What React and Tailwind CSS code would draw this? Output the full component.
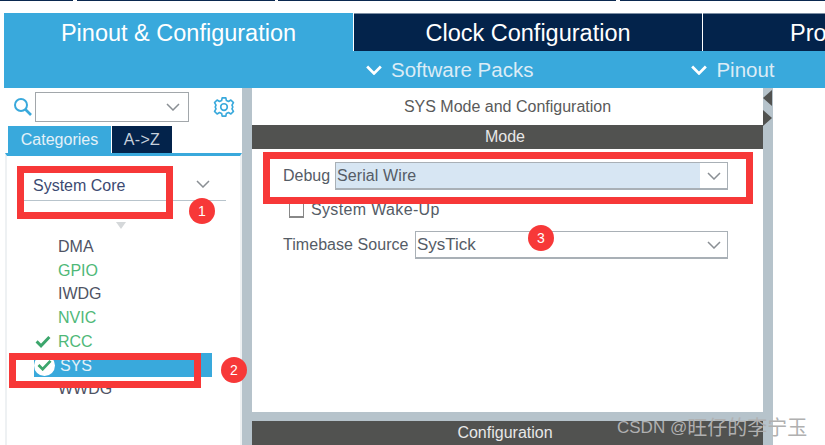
import React from "react";

const font = { fontFamily: '"Liberation Sans", Arial, sans-serif' };

function Chevron({ className = "", color = "#8a8f94", w = 14, h = 8, sw = 1.5 }) {
  return (
    <svg width={w} height={h} viewBox="0 0 14 8" className={className} fill="none">
      <path d="M1 1 L7 7 L13 1" stroke={color} strokeWidth={sw} />
    </svg>
  );
}

function Check({ color = "#3ca66c", size = 16 }) {
  return (
    <svg width={size} height={size * 0.8} viewBox="0 0 16 13" fill="none">
      <path d="M1.5 6.5 L6 11 L14.5 2" stroke={color} strokeWidth="3" />
    </svg>
  );
}

function Gear() {
  return (
    <svg width="22" height="22" viewBox="0 0 24 24" fill="none" stroke="#39a9dc" strokeWidth="1.8" strokeLinejoin="round">
      <path d="M10 2h4l.6 3 2.3 1 2.6-1.6 2.8 2.9L20.7 10l.9 2-.9 2 1.6 2.7-2.8 2.9-2.6-1.6-2.3 1-.6 3h-4l-.6-3-2.3-1-2.6 1.6-2.8-2.9L3.3 14l-.9-2 .9-2-1.6-2.7 2.8-2.9L7.1 6l2.3-1z" />
      <circle cx="12" cy="12" r="3.6" />
    </svg>
  );
}

function Badge({ n, className }) {
  return (
    <div className={`absolute w-[26px] h-[26px] rounded-full bg-[#f73838] text-white text-[14px] flex items-center justify-center ${className}`}>
      {n}
    </div>
  );
}

function Item({ label, color, check }) {
  return (
    <div className="h-[23.7px] flex items-center">
      <div className="w-[24px] flex justify-start pl-[1px]">{check && <Check />}</div>
      <span className={`text-[16px] ${color}`}>{label}</span>
    </div>
  );
}

export default function App() {
  return (
    <div style={font} className="relative w-[825px] h-[445px] overflow-hidden bg-white flex flex-col">
      <div className="h-[13px] flex shrink-0 items-start">
        <div className="h-px w-[73px] bg-[#0a2850]" />
        <div className="h-px w-[198px] ml-[4px] bg-[#0a2850]" />
        <div className="h-px w-[338px] ml-[3px] bg-[#0a2850]" />
        <div className="h-px flex-1 ml-[4px] bg-[#0a2850]" />
      </div>

      <div className="h-[38px] flex shrink-0 pl-[4px] text-[23.5px] leading-[38px] text-white">
        <div className="w-[349px] bg-[#39a9dc] text-center leading-[40px]">Pinout &amp; Configuration</div>
        <div className="w-[348px] ml-px bg-[#03234b] border-t border-[#7c8ea3] text-center">Clock Configuration</div>
        <div className="flex-1 ml-px bg-[#03234b] border-t border-[#7c8ea3] pl-[87px] whitespace-nowrap overflow-hidden">Pro</div>
      </div>

      <div className="h-[37px] ml-[4px] shrink-0 bg-[#39a9dc] flex items-center text-[#dcecf6] text-[20.5px]">
        <div className="ml-[362px] flex items-center gap-[9px]">
          <Chevron color="#ffffff" w={16} h={10} sw={2.4} />
          <span className="mt-[1px]">Software Packs</span>
        </div>
        <div className="ml-[158px] flex items-center gap-[9px]">
          <Chevron color="#ffffff" w={16} h={10} sw={2.4} />
          <span className="mt-[1px]">Pinout</span>
        </div>
      </div>

      <div className="flex-1 flex min-h-0">
        <div className="w-[242px] pl-[5px] shrink-0 flex flex-col">
          <div className="h-[36px] flex items-center pt-[2px]">
            <svg width="20" height="20" viewBox="0 0 20 20" fill="none" stroke="#39a9dc" strokeWidth="2" className="ml-[8px]">
              <circle cx="8" cy="8" r="6" />
              <path d="M12.5 12.5 L18 18" strokeWidth="2.6" />
            </svg>
            <div className="w-[154px] h-[30px] ml-[2px] border border-[#a2a7ab] bg-white flex items-center justify-end pr-[8px]">
              <Chevron />
            </div>
            <div className="ml-[24px]"><Gear /></div>
          </div>

          <div className="h-[29px] flex items-end pl-[3px]">
            <div className="w-[103px] h-[27px] bg-[#39a9dc] text-[#e4f1f8] text-[16px] text-center leading-[28px]">Categories</div>
            <div className="w-[60px] h-[27px] ml-[1px] bg-[#03234b] text-[#c6d0db] text-[16px] tracking-[0.3px] text-center leading-[27px]">A-&gt;Z</div>
          </div>

          <div className="flex-1 border-t-[3px] border-t-[#39a9dc] border-l-2 border-l-[#eef1f3] border-r-2 border-r-[#eef1f3] flex flex-col">
            <div className="ml-[17px] mr-[14px] mt-[13px] h-[32px] border-b border-[#b8c4cc] flex items-center justify-between text-[16px] text-[#3c4a72]">
              <span className="ml-[9px] mt-[3px]">System Core</span>
              <Chevron className="mr-[16px] -mt-[2px]" />
            </div>
            <div className="ml-[109px] mt-[21px] mb-[6px] w-0 h-0 border-l-[5px] border-r-[5px] border-t-[7px] border-l-transparent border-r-transparent border-t-[#d5d8da]" />
            <div className="pl-[27px] flex flex-col">
              <Item label="DMA" color="text-[#4f5364]" />
              <Item label="GPIO" color="text-[#4fb878]" />
              <Item label="IWDG" color="text-[#4f5364]" />
              <Item label="NVIC" color="text-[#4fb878]" />
              <Item label="RCC" color="text-[#4fb878]" check />
              <div className="h-[24px] mr-[28px] bg-[#39a9dc] flex items-center">
                <div className="w-[26px] h-[24px] flex items-center">
                  <div className="w-[21px] h-[21px] rounded-full bg-white flex items-center justify-center"><Check size={15} /></div>
                </div>
                <span className="text-[16px] text-[#e4f1f8] mt-[1px]">SYS</span>
              </div>
              <Item label="WWDG" color="text-[#4f5364]" />
            </div>
          </div>
        </div>

        <div className="w-[10px] shrink-0 bg-[#b6c3cb]" />

        <div className="w-[511px] shrink-0 flex flex-col text-[16px] text-[#555c66]">
          <div className="h-[37px] flex items-center justify-center text-[16px] text-[#5a5a5a]">SYS Mode and Configuration</div>
          <div className="h-[24px] bg-[#515250] text-[#e8e8e8] flex items-center justify-center pr-[5px]">Mode</div>
          <div className="flex-1 flex flex-col">
            <div className="mt-[13px] ml-[31px] flex items-center h-[28px]">
              <span className="w-[52px]">Debug</span>
              <div className="w-[393px] h-[28px] border border-[#a9b0b6] border-b-2 bg-white flex">
                <div className="flex-1 bg-[#d7e6f3] pl-[1px] leading-[26px] tracking-[0.1px]">Serial Wire</div>
                <div className="w-[27px] flex items-center justify-center"><Chevron /></div>
              </div>
            </div>
            <div className="ml-[37px] mt-[11px] flex items-center h-[18px]">
              <div className="w-[15px] h-[15px] border border-[#888] border-b-2 mr-[7px]" />
              <span className="tracking-[0.35px]">System Wake-Up</span>
            </div>
            <div className="mt-[12px] ml-[31px] flex items-center h-[28px]">
              <span className="w-[132px] whitespace-nowrap tracking-[0.05px]">Timebase Source</span>
              <div className="w-[313px] h-[28px] border border-[#a9b0b6] border-b-2 bg-white flex items-center justify-between pl-[1px] pr-[6px]">
                <span className="text-[17px]">SysTick</span>
                <Chevron />
              </div>
            </div>
          </div>
          <div className="h-[9px] bg-[#b6c3cb] mt-auto" />
          <div className="h-[24px] bg-[#515250] text-[#e8e8e8] flex items-center justify-center pr-[5px]">Configuration</div>
        </div>

        <div className="relative w-[10px] shrink-0 bg-[#b6c3cb]">
          <div className="absolute left-0 top-[2px] w-0 h-0 border-y-[8px] border-y-transparent border-r-[9px] border-r-[#515250]" />
          <div className="absolute left-0 top-[22px] w-0 h-0 border-y-[8px] border-y-transparent border-l-[9px] border-l-[#515250]" />
        </div>
      </div>

      {/* annotations */}
      <div className="absolute left-[17px] top-[166px] w-[156px] h-[53px] border-[7px] border-[#f73838]" />
      <div className="absolute left-[9px] top-[353px] w-[192px] h-[35px] border-[7px] border-[#f73838]" />
      <div className="absolute left-[263px] top-[152px] w-[490px] h-[52px] border-[7px] border-[#f73838]" />
      <Badge n="1" className="left-[189px] top-[198px]" />
      <Badge n="2" className="left-[221px] top-[357px]" />
      <Badge n="3" className="left-[528px] top-[225px]" />

      <div
        className="absolute left-[617px] top-[413px] text-[17px] text-[#b0b0b0] whitespace-nowrap flex items-center"
        style={{ fontFamily: '"Liberation Sans", "Noto Sans CJK SC", sans-serif' }}
      >
        <span>CSDN @</span>
        <span className="text-[20px]">旺仔的李宁玉</span>
      </div>
    </div>
  );
}
